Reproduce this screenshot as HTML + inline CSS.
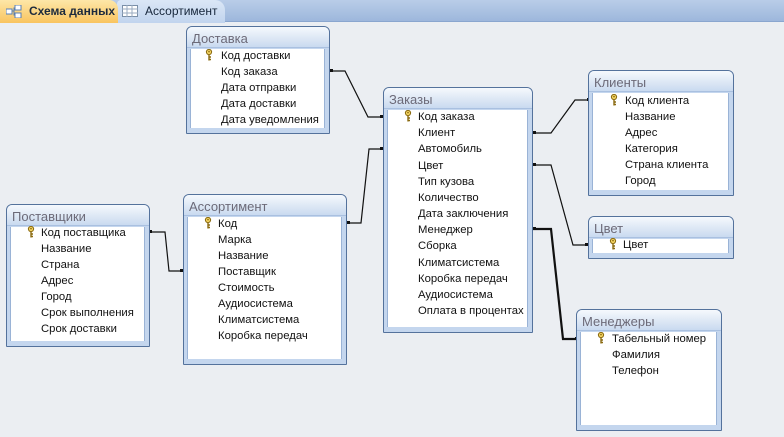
<!DOCTYPE html>
<html><head><meta charset="utf-8">
<style>
*{margin:0;padding:0;box-sizing:border-box}
body{width:784px;height:437px;overflow:hidden;background:#ebeef2;font-family:"Liberation Sans","DejaVu Sans",sans-serif;position:relative}
.bar{position:absolute;left:0;top:0;width:784px;height:22px;background:linear-gradient(#b9cde8,#9db7dc);border-bottom:1px solid #8aa6cf}
.tab{position:absolute;top:0;height:23px;font-size:12px;font-weight:bold;color:#1d2a3c;line-height:22px;white-space:nowrap}
.t1{left:0;width:118px;background:linear-gradient(#fde7a8,#f9c45f);padding-left:29px;border-radius:0 9px 0 0}
.t2{left:117px;width:108px;background:linear-gradient(#dbe7f6,#c1d4ee);padding-left:28px;font-weight:normal;color:#15253a;border-radius:4px 10px 0 0}
.box{position:absolute;border:1px solid #54729c;border-radius:6px 6px 1px 1px;background:#c4d6ee;overflow:hidden}
.ttl{height:21px;background:linear-gradient(#f5f9fd,#dbe6f4 60%,#c9daf0);font-size:13px;color:#6c6a78;padding-left:5px;line-height:23px;border-bottom:1px solid #a9c0e0}
.lst{position:absolute;left:3px;right:4px;top:22px;bottom:5px;background:#fff;border-left:1px solid #9ab3d6;border-right:1px solid #9ab3d6}
.r{position:absolute;font-size:11.3px;color:#111;height:16px;line-height:16px;white-space:nowrap;margin-top:1px}
.k{position:absolute;width:8px;height:12px;margin-top:1px}
svg.l{position:absolute;left:0;top:0}
</style></head><body>
<div class="bar"></div>
<div class="tab t2"><svg style="position:absolute;left:5px;top:5px" width="16" height="12"><rect x="0.5" y="0.5" width="15" height="11" fill="#fff" stroke="#7a8fa8"/><path d="M0 4H16M0 8H16M5 0V12M10 0V12" stroke="#9aabc0"/></svg>Ассортимент</div>
<div class="tab t1"><svg style="position:absolute;left:6px;top:5px" width="16" height="13"><rect x="0" y="4" width="6" height="5" fill="#fff" stroke="#5a7fb0"/><rect x="9" y="0" width="6" height="5" fill="#fff" stroke="#5a7fb0"/><rect x="9" y="8" width="6" height="5" fill="#fff" stroke="#5a7fb0"/><path d="M6 6H8V3H9M8 6V10H9" stroke="#5a7fb0" fill="none"/></svg>Схема данных</div>

<svg class="l" width="784" height="437">
<g stroke="#111" fill="none" stroke-width="1.2">
<path d="M330 71H345L368 117H383"/>
<path d="M347 223H361L369 149H383"/>
<path d="M533 133H551L575 100H590"/>
<path d="M533 165H551L573 245H588"/>
<path d="M533 229H551L563 339H578" stroke-width="2.2"/>
<path d="M149 232H165L169 271H183"/>
</g>
<g fill="#111">
<rect x="330" y="69" width="3" height="3"/><rect x="380" y="115" width="3" height="3"/>
<rect x="347" y="221" width="3" height="3"/><rect x="380" y="147" width="3" height="3"/>
<rect x="533" y="131" width="3" height="3"/><rect x="587" y="98" width="3" height="3"/>
<rect x="533" y="163" width="3" height="3"/><rect x="585" y="243" width="3" height="3"/>
<rect x="533" y="227" width="3" height="3"/><rect x="575" y="337" width="3" height="3"/>
<rect x="149" y="230" width="3" height="3"/><rect x="180" y="269" width="3" height="3"/>
</g>
</svg>

<div class="box" style="left:186px;top:26px;width:144px;height:108px"><div class="ttl">Доставка</div><div class="lst"></div></div>
<div class="box" style="left:383px;top:87px;width:150px;height:246px"><div class="ttl">Заказы</div><div class="lst"></div></div>
<div class="box" style="left:588px;top:70px;width:146px;height:126px"><div class="ttl">Клиенты</div><div class="lst"></div></div>
<div class="box" style="left:588px;top:216px;width:146px;height:43px"><div class="ttl">Цвет</div><div class="lst"></div></div>
<div class="box" style="left:576px;top:309px;width:146px;height:122px"><div class="ttl">Менеджеры</div><div class="lst"></div></div>
<div class="box" style="left:6px;top:204px;width:144px;height:143px"><div class="ttl">Поставщики</div><div class="lst"></div></div>
<div class="box" style="left:183px;top:194px;width:164px;height:171px"><div class="ttl">Ассортимент</div><div class="lst"></div></div>

<svg width="0" height="0" style="position:absolute"><defs><symbol id="key" viewBox="0 0 8 12"><circle cx="4" cy="3" r="2.6" fill="#f2d260" stroke="#8a6a10" stroke-width="1"/><circle cx="4" cy="2.6" r="0.8" fill="#8a6a10"/><path d="M4 5.5V11.5M4 8H6M4 10.5H6" stroke="#8a6a10" stroke-width="1.4" fill="none"/></symbol></defs></svg>

<svg class="k" style="left:205px;top:48px"><use href="#key"/></svg>
<div class="r" style="left:221px;top:47px">Код доставки</div>
<div class="r" style="left:221px;top:63px">Код заказа</div>
<div class="r" style="left:221px;top:79px">Дата отправки</div>
<div class="r" style="left:221px;top:95px">Дата доставки</div>
<div class="r" style="left:221px;top:111px">Дата уведомления</div>

<svg class="k" style="left:404px;top:109px"><use href="#key"/></svg>
<div class="r" style="left:418px;top:108px">Код заказа</div>
<div class="r" style="left:418px;top:124px">Клиент</div>
<div class="r" style="left:418px;top:140px">Автомобиль</div>
<div class="r" style="left:418px;top:157px">Цвет</div>
<div class="r" style="left:418px;top:173px">Тип кузова</div>
<div class="r" style="left:418px;top:189px">Количество</div>
<div class="r" style="left:418px;top:205px">Дата заключения</div>
<div class="r" style="left:418px;top:221px">Менеджер</div>
<div class="r" style="left:418px;top:237px">Сборка</div>
<div class="r" style="left:418px;top:254px">Климатсистема</div>
<div class="r" style="left:418px;top:270px">Коробка передач</div>
<div class="r" style="left:418px;top:286px">Аудиосистема</div>
<div class="r" style="left:418px;top:302px">Оплата в процентах</div>

<svg class="k" style="left:610px;top:93px"><use href="#key"/></svg>
<div class="r" style="left:625px;top:92px">Код клиента</div>
<div class="r" style="left:625px;top:108px">Название</div>
<div class="r" style="left:625px;top:124px">Адрес</div>
<div class="r" style="left:625px;top:140px">Категория</div>
<div class="r" style="left:625px;top:156px">Страна клиента</div>
<div class="r" style="left:625px;top:172px">Город</div>

<svg class="k" style="left:609px;top:237px"><use href="#key"/></svg>
<div class="r" style="left:623px;top:236px">Цвет</div>

<svg class="k" style="left:597px;top:331px"><use href="#key"/></svg>
<div class="r" style="left:612px;top:330px">Табельный номер</div>
<div class="r" style="left:612px;top:346px">Фамилия</div>
<div class="r" style="left:612px;top:362px">Телефон</div>

<svg class="k" style="left:27px;top:225px"><use href="#key"/></svg>
<div class="r" style="left:41px;top:224px">Код поставщика</div>
<div class="r" style="left:41px;top:240px">Название</div>
<div class="r" style="left:41px;top:256px">Страна</div>
<div class="r" style="left:41px;top:272px">Адрес</div>
<div class="r" style="left:41px;top:288px">Город</div>
<div class="r" style="left:41px;top:304px">Срок выполнения</div>
<div class="r" style="left:41px;top:320px">Срок доставки</div>

<svg class="k" style="left:204px;top:216px"><use href="#key"/></svg>
<div class="r" style="left:218px;top:215px">Код</div>
<div class="r" style="left:218px;top:231px">Марка</div>
<div class="r" style="left:218px;top:247px">Название</div>
<div class="r" style="left:218px;top:263px">Поставщик</div>
<div class="r" style="left:218px;top:279px">Стоимость</div>
<div class="r" style="left:218px;top:295px">Аудиосистема</div>
<div class="r" style="left:218px;top:311px">Климатсистема</div>
<div class="r" style="left:218px;top:327px">Коробка передач</div>
</body></html>
